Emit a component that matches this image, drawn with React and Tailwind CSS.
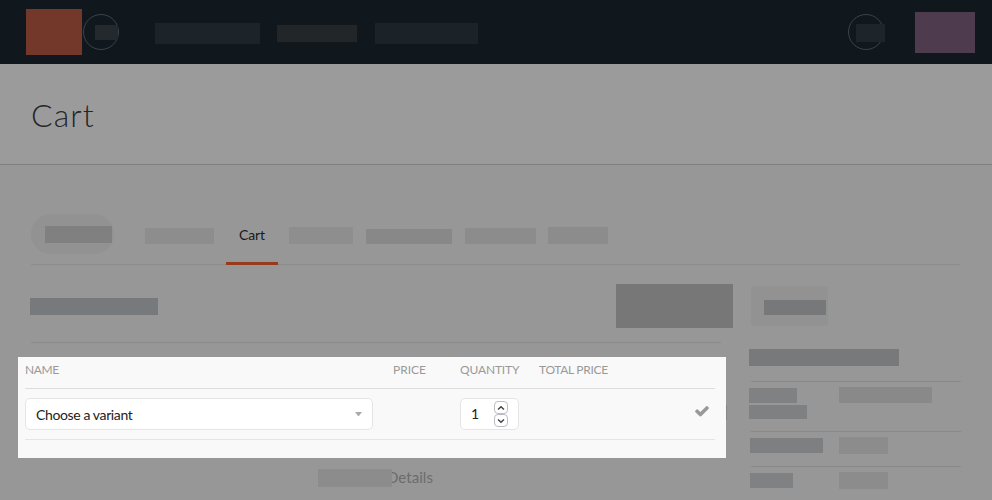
function Block({ className }) {
  return <div className={`shrink-0 ${className}`} />;
}

function Header() {
  return (
    <header className="flex h-16 items-start bg-[#10181d]">
      <Block className="ml-[26px] mt-[9px] h-[46px] w-14 bg-[#733829]" />
      <div className="relative ml-px mt-3.5 h-9 w-9 rounded-full border border-[#3f4345]">
        <div className="absolute left-[11px] top-2.5 h-[15px] w-[23px] bg-[#23292c]" />
      </div>
      <Block className="ml-9 mt-[23px] h-[21px] w-[105px] bg-[#1c2329]" />
      <Block className="ml-[17px] mt-[25px] h-[17px] w-20 bg-[#232629]" />
      <Block className="ml-[18px] mt-[23px] h-[21px] w-[103px] bg-[#1c2328]" />
      <div className="relative ml-auto mt-3.5 h-9 w-9 rounded-full border border-[#3f4345]">
        <div className="absolute left-[7px] top-[9px] h-[18px] w-[29px] bg-[#1d252a]" />
      </div>
      <Block className="ml-[31px] mr-[17px] mt-3 h-[41px] w-[60px] bg-[#4f3b4e]" />
    </header>
  );
}

function Tabs() {
  return (
    <nav className="ml-[31px] mt-[49px] flex h-[51px] w-[929px] items-start border-b border-[#8c8c8c]">
      <div className="h-10 w-[83px] rounded-full bg-[#929292] pl-3.5 pt-3">
        <Block className="h-[17px] w-[67px] bg-[#808080]" />
      </div>
      <Block className="ml-[31px] mt-3.5 h-4 w-[69px] bg-[#8d8d8d]" />
      <div className="ml-3 h-[51px] w-[52px] shrink-0 border-b-[3px] border-[#963b1d] pt-[11px] text-center text-[14px] leading-5 tracking-[-0.1px] text-[#17191b]">
        Cart
      </div>
      <Block className="ml-[11px] mt-[13px] h-[17px] w-16 bg-[#8e8e8e]" />
      <Block className="ml-[13px] mt-[15px] h-[15px] w-[86px] bg-[#888888]" />
      <Block className="ml-[13px] mt-3.5 h-4 w-[71px] bg-[#8c8c8c]" />
      <Block className="ml-3 mt-[13px] h-[17px] w-[60px] bg-[#8c8c8c]" />
    </nav>
  );
}

function SpinButton({ d }) {
  return (
    <div className="flex h-[13px] w-3.5 items-center justify-center rounded border border-[#bcbcc4] bg-white">
      <svg className="h-1.5 w-2" viewBox="0 0 8 6" fill="none" stroke="#444" strokeWidth="1.5">
        <path d={d} />
      </svg>
    </div>
  );
}

function CartTable() {
  return (
    <section className="ml-[18px] h-[101px] w-[708px] bg-[#f9f9f9] pl-[7px] pr-[11px]">
      <div className="flex h-8 border-b border-[#dedede] pt-[5px] text-[12px] leading-4 text-[#999]">
        <div className="w-[368px] tracking-[-0.4px]">NAME</div>
        <div className="w-[67px]">PRICE</div>
        <div className="w-[79px] tracking-[-0.15px]">QUANTITY</div>
        <div className="tracking-[-0.3px]">TOTAL PRICE</div>
      </div>
      <div className="flex h-[51px] items-start border-b border-[#e5e5e5] pt-[9px] text-[14px] text-[#222]">
        <div className="flex h-8 w-[348px] items-center justify-between rounded-[5px] border border-[#e5e5e5] bg-white pl-2.5 pr-2.5">
          <span className="pt-0.5 leading-5 tracking-[-0.38px]">Choose a variant</span>
          <svg className="mb-px h-1 w-[7px]" viewBox="0 0 7 4">
            <path d="M0 0h7L3.5 4.5z" fill="#aaa" />
          </svg>
        </div>
        <div className="ml-[87px] flex h-8 w-[59px] items-start justify-between rounded-[5px] border border-[#e5e5e5] bg-white pl-2.5 pr-2.5 pt-0.5">
          <span className="pt-[3px] leading-5">1</span>
          <div>
            <SpinButton d="M1 4.5L4 1.7L7 4.5" />
            <SpinButton d="M1 1.5L4 4.3L7 1.5" />
          </div>
        </div>
        <svg className="ml-auto mr-[5px] mt-[5px] h-4 w-4" viewBox="0 0 1792 1792" fill="#999">
          <path d="M1671 566q0 40-28 68l-724 724-136 136q-28 28-68 28t-68-28l-136-136-362-362q-28-28-28-68t28-68l136-136q28-28 68-28t68 28l294 295 656-657q28-28 68-28t68 28l136 136q28 28 28 68z" />
        </svg>
      </div>
    </section>
  );
}

function Sidebar() {
  return (
    <aside className="ml-4 w-[212px] pt-[21px]">
      <div className="ml-0.5 h-10 w-[77px] rounded-[3px] bg-[#929292] pl-[13px] pt-3.5">
        <Block className="h-[15px] w-[62px] bg-[#77787a]" />
      </div>
      <Block className="mt-[23px] h-[17px] w-[150px] bg-[#77797b]" />
      <div className="ml-0.5 mt-[15px] h-px w-[210px] bg-[#8a8a8a]" />
      <div className="flex h-[49px] items-start pt-[5px]">
        <div className="w-[90px] pt-px">
          <Block className="h-[15px] w-12 bg-[#7f8182]" />
          <Block className="mt-0.5 h-3.5 w-[58px] bg-[#7e8081]" />
        </div>
        <Block className="h-4 w-[93px] bg-[#898989]" />
      </div>
      <div className="ml-0.5 h-px w-[210px] bg-[#8a8a8a]" />
      <div className="flex h-[34px] items-start pt-[5px]">
        <Block className="ml-px mt-px h-[15px] w-[73px] bg-[#7d7f80]" />
        <Block className="ml-4 h-[17px] w-[49px] bg-[#8c8c8c]" />
      </div>
      <div className="ml-0.5 h-px w-[210px] bg-[#8a8a8a]" />
      <div className="flex items-start pt-[5px]">
        <Block className="ml-px mt-px h-[15px] w-[43px] bg-[#7f8182]" />
        <Block className="ml-[46px] h-[17px] w-[49px] bg-[#8c8c8c]" />
      </div>
    </aside>
  );
}

export default function App() {
  return (
    <div className="h-[500px] w-[992px] overflow-hidden bg-[#979797] font-['Lato',sans-serif]">
      <Header />
      <div className="h-[101px] border-b border-[#808080] bg-[#9b9b9b] pl-[31px] pt-[31px]">
        <h1 className="text-[32px] font-light leading-10 tracking-[1.1px] text-[#242628]">Cart</h1>
      </div>
      <Tabs />
      <div className="flex items-start">
        <main className="w-[733px]">
          <div className="flex items-start pl-[30px] pt-[19px]">
            <Block className="mt-3.5 h-[17px] w-32 bg-[#767a7c]" />
            <Block className="ml-auto h-11 w-[117px] bg-[#777777]" />
          </div>
          <div className="mb-3.5 ml-[31px] mt-3.5 h-px w-[690px] bg-[#8b8b8b]" />
          <div className="flex items-center">
            <CartTable />
            <Block className="mt-[9px] h-[15px] w-px bg-[#888888]" />
          </div>
          <div className="flex items-start pl-[318px] pt-[11px]">
            <div className="relative z-10 h-[18px] w-[74px] bg-[#8c8c8c]" />
            <span className="-ml-[5px] -mt-0.5 text-[15px] leading-5 tracking-[0.05px] text-[#6c6c6c]">Details</span>
          </div>
        </main>
        <Sidebar />
      </div>
    </div>
  );
}
